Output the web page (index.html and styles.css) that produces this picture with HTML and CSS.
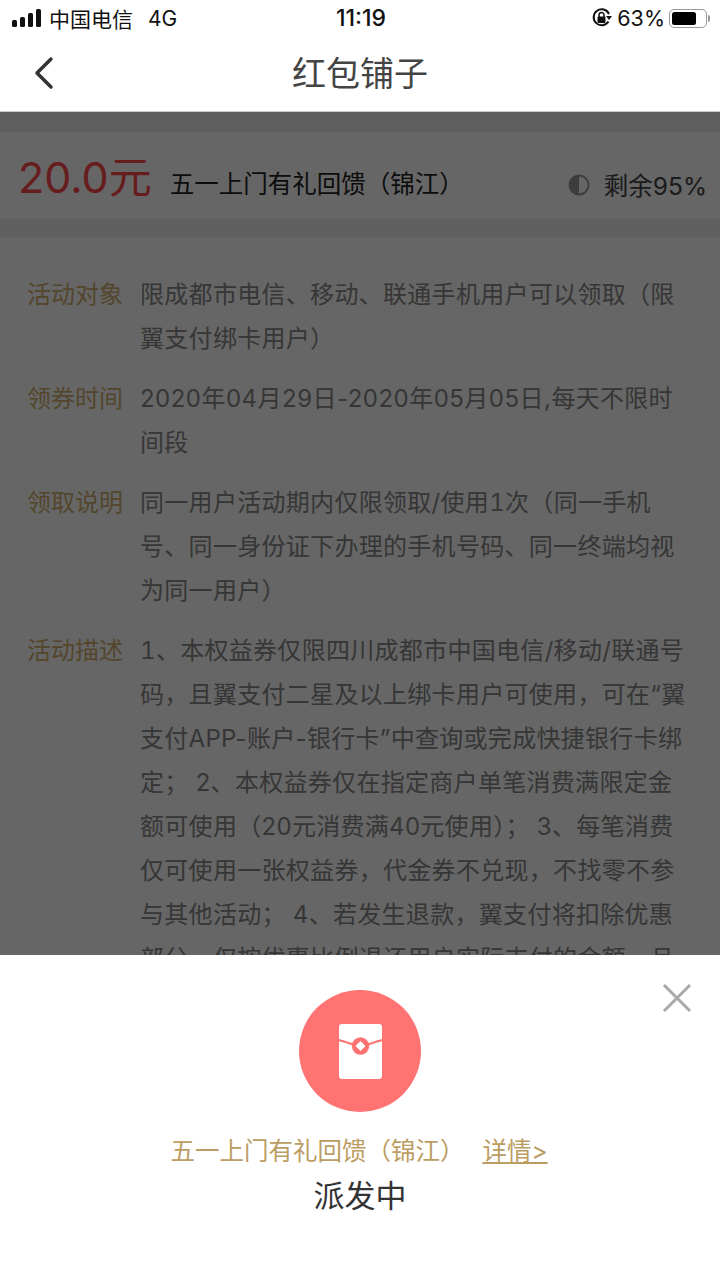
FILE: index.html
```html
<!DOCTYPE html>
<html lang="zh-CN">
<head>
<meta charset="utf-8">
<title>红包铺子</title>
<link rel="stylesheet" href="styles.css">
</head>
<body>
<div class="page">
  <div class="status">
    <div class="status-left">
      <div class="signal"><i class="b1"></i><i class="b2"></i><i class="b3"></i><i class="b4"></i></div>
      <span class="carrier">中国电信</span><span class="net">4G</span>
    </div>
    <div class="time">11:19</div>
    <div class="status-right">
      <svg class="lock" width="22" height="22" viewBox="0 0 22 22"><path d="M17.500 14.500A8 8 0 1 1 18 7" fill="none" stroke="#111" stroke-width="2"/><path d="M15 9h6l-3 4z" fill="#111"/><rect x="6.500" y="9.500" width="8" height="6.500" rx="1" fill="#111"/><path d="M8 10V8a2.500 2.500 0 0 1 5 0v2" fill="none" stroke="#111" stroke-width="1.500"/></svg>
      <span class="pct">63%</span>
      <div class="battery"><div class="battery-fill"></div></div><div class="battery-tip"></div>
    </div>
  </div>
  <div class="nav">
    <svg class="back" width="24" height="34" viewBox="0 0 24 34"><path d="M19 3 5 17l14 14" fill="none" stroke="#333" stroke-width="3.500" stroke-linecap="round" stroke-linejoin="round"/></svg>
    <h1 class="title">红包铺子</h1>
  </div>
  <div class="content">
    <div class="card">
      <div class="amount">20.0元</div>
      <div class="name">五一上门有礼回馈（锦江）</div>
      <div class="remain">
        <svg class="half" width="22" height="22" viewBox="0 0 22 22"><circle cx="11" cy="11" r="9.500" fill="none" stroke="#999" stroke-width="2"/><path d="M11 1.500a9.500 9.500 0 0 0 0 19z" fill="#999"/></svg>
        <span>剩余95%</span>
      </div>
    </div>
    <div class="details">
      <div class="row"><div class="label">活动对象</div><div class="text">限成都市电信、移动、联通手机用户可以领取（限<br>翼支付绑卡用户）</div></div>
      <div class="row"><div class="label">领券时间</div><div class="text"><span class="date">2020年04月29日-2020年05月05日,</span>每天不限时<br>间段</div></div>
      <div class="row"><div class="label">领取说明</div><div class="text">同一用户活动期内仅限领取/使用<span class="num">1</span>次（同一手机<br>号、同一身份证下办理的手机号码、同一终端均视<br>为同一用户）</div></div>
      <div class="row"><div class="label">活动描述</div><div class="text"><span class="num">1</span>、本权益券仅限四川成都市中国电信/移动/联通号<br>码，且翼支付二星及以上绑卡用户可使用，可在“翼<br>支付APP-账户-银行卡”中查询或完成快捷银行卡绑<br>定； 2、本权益券仅在指定商户单笔消费满限定金<br>额可使用（20元消费满40元使用）； 3、每笔消费<br>仅可使用一张权益券，代金券不兑现，不找零不参<br>与其他活动； 4、若发生退款，翼支付将扣除优惠<br>部分，仅按优惠比例退还用户实际支付的金额，且</div></div>
    </div>
    <div class="dim"></div>
  </div>
  <div class="sheet">
    <svg class="close" width="32" height="32" viewBox="0 0 32 32"><path d="M3 3l26 26M29 3 3 29" fill="none" stroke="#a8a8a8" stroke-width="3"/></svg>
    <div class="badge">
      <svg width="43" height="55" viewBox="0 0 43 55"><rect width="43" height="55" rx="3" fill="#fff"/><path d="M0 16c6 1.500 10 3 14 4.500M43 16c-6 1.500-10 3-14 4.500" fill="none" stroke="#ff7373" stroke-width="2.200"/><circle cx="21.500" cy="22" r="8.700" fill="#ff7373"/><path d="M21.500 17.500l4.500 4.500-4.500 4.500-4.500-4.500z" fill="#fff" stroke="#fff" stroke-linejoin="round"/></svg>
    </div>
    <div class="sheet-line"><span class="sheet-name">五一上门有礼回馈（锦江）</span><a class="more">详情&gt;</a></div>
    <div class="state">派发中</div>
  </div>
</div>
</body>
</html>
```

FILE: styles.css
```css
* { box-sizing: border-box; }
html, body { margin: 0; padding: 0; }
body { font-family: Inter, "Noto Sans CJK SC", sans-serif; background: #fff; color: #333; }
.page { position: relative; width: 720px; height: 1280px; overflow: hidden; display: flex; flex-direction: column; }

.status { height: 36px; flex: none; display: grid; grid-template-columns: 1fr auto 1fr; align-items: center; padding: 0 10px 0 12px; color: #111; font-size: 21px; }
.status-left { display: flex; align-items: center; }
.signal { display: flex; align-items: flex-end; gap: 3px; height: 18px; margin-right: 8px; }
.signal i { display: block; width: 5px; background: #111; border-radius: 1.500px; }
.b1 { height: 7px; } .b2 { height: 10px; } .b3 { height: 14px; } .b4 { height: 18px; }
.net { margin-left: 15px; }
.time { font-size: 23px; font-weight: 500; }
.status-right { display: flex; align-items: center; justify-content: flex-end; }
.lock { margin-right: 4px; }
.pct { font-size: 21.500px; margin-right: 4px; }
.battery { width: 38px; height: 19px; border: 1.500px solid #999; border-radius: 5px; padding: 2px; }
.battery-fill { width: 24px; height: 100%; background: #000; border-radius: 2.500px; }
.battery-tip { width: 2px; height: 7px; background: #999; margin-left: 1px; border-radius: 0 2px 2px 0; }

.nav { height: 75px; flex: none; display: flex; align-items: center; justify-content: center; position: relative; background: #fff; padding-bottom: 4px; }
.back { position: absolute; left: 32px; top: 20px; }
.title { margin: 0; font-size: 34px; font-weight: 400; color: #444; }

.content { position: relative; flex: 1; background: #eee; border-top: 1px solid #ccc; padding-top: 20px; }
.card { height: 87px; background: #fff; display: flex; align-items: center; padding: 0 13px 0 18px; }
.amount { font-size: 43px; color: #ff4a4a; margin: -4px 18px 0 0; white-space: nowrap; }
.name { font-size: 24.500px; color: #222; flex: 1; margin-top: 14px; white-space: nowrap; }
.remain { display: flex; align-items: center; gap: 14px; font-size: 24.500px; color: #444; margin-top: 18px; white-space: nowrap; }
.details { margin-top: 18px; background: #fff; padding: 36px 32px 0 27px; height: 800px; display: flex; flex-direction: column; gap: 16px; }
.row { display: flex; gap: 17px; font-size: 24px; line-height: 44px; }
.label { flex: none; width: 96px; color: #d0ae70; }
.text { color: #888; white-space: nowrap; letter-spacing: .3px; }
.date { letter-spacing: .48px; }
.num { font-variant-numeric: tabular-nums; }
.dim { position: absolute; inset: 0; background: rgba(0, 0, 0, .6); }

.sheet { position: absolute; left: 0; right: 0; bottom: 0; height: 325px; background: #fff; display: flex; flex-direction: column; align-items: center; padding-top: 35px; }
.close { position: absolute; right: 27px; top: 27px; }
.badge { width: 122px; height: 122px; border-radius: 50%; background: #ff7373; display: flex; align-items: center; justify-content: center; }
.sheet-line { margin-top: 21px; display: flex; gap: 18px; font-size: 24.500px; line-height: 36px; color: #bb9d63; margin-right: 2px; }
.more { text-decoration: underline; }
.state { margin-top: 5px; font-size: 31px; line-height: 44px; color: #333; }
```
